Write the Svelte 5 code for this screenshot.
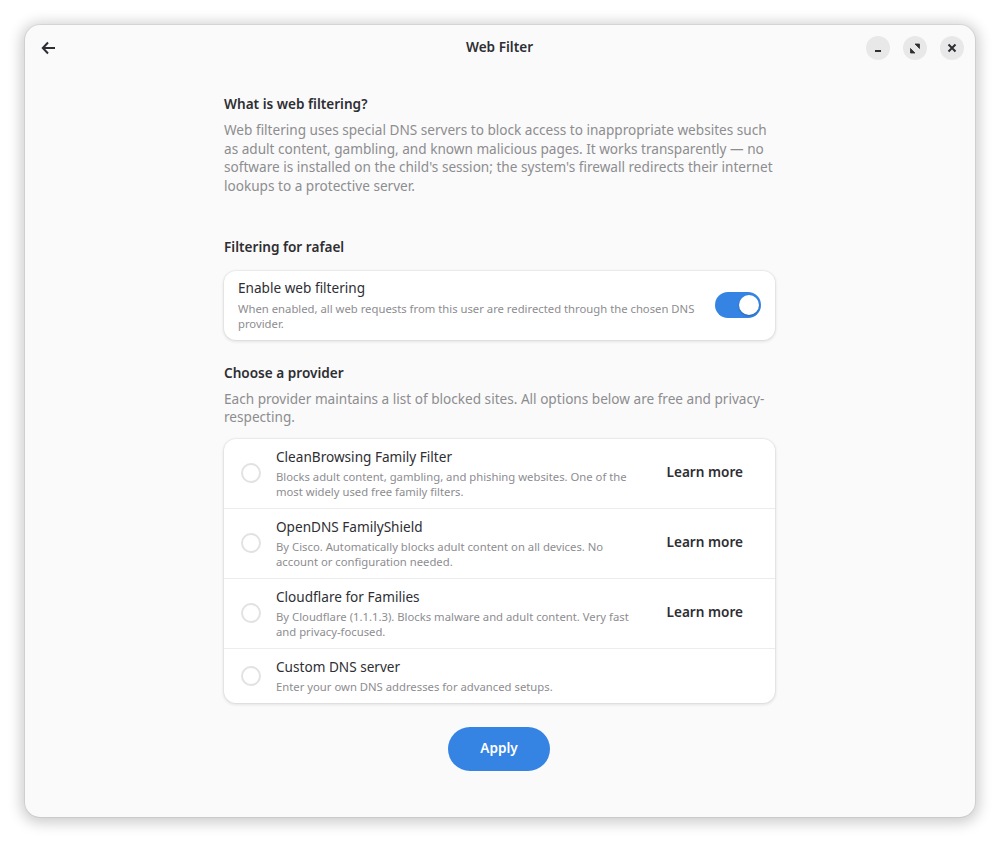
<script lang="ts">
  const providers = [
    { name: "CleanBrowsing Family Filter", desc: "Blocks adult content, gambling, and phishing websites. One of the most widely used free family filters.", more: true },
    { name: "OpenDNS FamilyShield", desc: "By Cisco. Automatically blocks adult content on all devices. No account or configuration needed.", more: true },
    { name: "Cloudflare for Families", desc: "By Cloudflare (1.1.1.3). Blocks malware and adult content. Very fast and privacy-focused.", more: true },
    { name: "Custom DNS server", desc: "Enter your own DNS addresses for advanced setups.", more: false },
  ];
</script>

<div class="page">
  <div class="window">
    <header>
      <button class="back" aria-label="Back">
        <svg width="16" height="16" viewBox="0 0 16 16"><path d="M7 2.5 1.8 8 7 13.5M2.2 8H14" fill="none" stroke="#2e2e33" stroke-width="2"/></svg>
      </button>
      <h1>Web Filter</h1>
      <div class="controls">
        <button aria-label="Minimize">
          <svg width="16" height="16" viewBox="0 0 16 16"><rect x="5" y="10" width="6" height="2" fill="#2e2e33"/></svg>
        </button>
        <button aria-label="Maximize">
          <svg width="16" height="16" viewBox="0 0 16 16"><path d="M8 4h4.5v4.5zM3.5 8.5V13H8z" fill="#2e2e33" stroke="#2e2e33" stroke-width="0.8"/></svg>
        </button>
        <button aria-label="Close">
          <svg width="16" height="16" viewBox="0 0 16 16"><path d="M4.5 4.5l7 7M11.5 4.5l-7 7" stroke="#2e2e33" stroke-width="2" fill="none"/></svg>
        </button>
      </div>
    </header>

    <main>
      <h2 class="first">What is web filtering?</h2>
      <p class="intro lead">Web filtering uses special DNS servers to block access to inappropriate websites such as adult content, gambling, and known malicious pages. It works transparently — no software is installed on the child's session; the system's firewall redirects their internet lookups to a protective server.</p>

      <h2 class="for">Filtering for rafael</h2>
      <section class="card toggle-row">
        <div class="text">
          <div class="title">Enable web filtering</div>
          <div class="sub">When enabled, all web requests from this user are redirected through the chosen DNS provider.</div>
        </div>
        <div class="switch"><span class="knob"></span></div>
      </section>

      <h2 class="choose">Choose a provider</h2>
      <p class="intro tight">Each provider maintains a list of blocked sites. All options below are free and privacy-respecting.</p>

      <section class="card list">
        {#each providers as p}
          <div class="row">
            <span class="radio"></span>
            <div class="text">
              <div class="title">{p.name}</div>
              <div class="sub">{p.desc}</div>
            </div>
            {#if p.more}
              <button class="more">Learn more</button>
            {/if}
          </div>
        {/each}
      </section>

      <button class="apply">Apply</button>
    </main>
  </div>
</div>

<style>
  :global(body) {
    background: #fff;
  }
  .page {
    padding: 25px;
    height: 792px;
    font-family: "Noto Sans", sans-serif;
    color: #2e2e33;
  }
  button {
    font-family: inherit;
    border: 0;
    padding: 0;
    cursor: pointer;
  }
  .window {
    height: 792px;
    background: #fafafa;
    border-radius: 15px;
    box-shadow: 0 0 0 1px rgba(0, 0, 0, 0.06), 0 2px 14px 4px rgba(0, 0, 0, 0.2);
    display: flex;
    flex-direction: column;
  }
  header {
    height: 46px;
    flex: none;
    display: flex;
    align-items: center;
    position: relative;
    padding: 0 11px 0 16px;
  }
  .back {
    background: none;
    display: flex;
    width: 16px;
    height: 16px;
  }
  h1 {
    flex: 1;
    margin: 0 0 2px;
    text-align: center;
    font-size: 13.6px;
    font-weight: 600;
    line-height: 20px;
    padding-left: 76px;
  }
  .controls {
    display: flex;
    gap: 13px;
  }
  .controls button {
    width: 24px;
    height: 24px;
    border-radius: 50%;
    background: #e8e8e8;
    display: flex;
    align-items: center;
    justify-content: center;
  }
  main {
    width: 551px;
    margin: 0 0 0 199px;
    display: flex;
    flex-direction: column;
  }
  h2 {
    margin: 0;
    font-size: 13.6px;
    font-weight: 600;
    line-height: 19px;
  }
  .first {
    margin-top: 23px;
  }
  .for {
    margin-top: 41px;
  }
  .choose {
    margin-top: 23px;
  }
  .intro {
    margin: 7px 0 0;
    font-size: 13.6px;
    line-height: 18.67px;
    color: #8d8d90;
  }
  .lead {
    margin-top: 8px;
  }
  .tight {
    margin-top: 8px;
  }
  .card {
    background: #fff;
    border-radius: 12px;
    box-shadow: 0 0 0 1px rgba(0, 0, 0, 0.03), 0 1px 3px 1px rgba(0, 0, 0, 0.09);
  }
  .toggle-row {
    margin-top: 15px;
    height: 69px;
    display: flex;
    align-items: center;
    padding: 0 14px;
    gap: 14px;
  }
  .toggle-row .title {
    line-height: 16px;
  }
  .toggle-row .sub {
    margin-top: 5px;
  }
  .text {
    flex: 1;
    min-width: 0;
  }
  .title {
    font-size: 13.6px;
    line-height: 18px;
    color: #2e2e33;
  }
  .sub {
    margin-top: 3px;
    font-size: 11.29px;
    line-height: 15px;
    color: #8d8d90;
  }
  .switch {
    width: 46px;
    height: 26px;
    flex: none;
    background: #3584e4;
    border-radius: 13px;
    display: flex;
    align-items: center;
    justify-content: flex-end;
    padding: 0 2px;
    box-sizing: border-box;
  }
  .knob {
    width: 20px;
    height: 20px;
    border-radius: 50%;
    background: #fff;
    box-shadow: 0 1px 2px rgba(0, 0, 0, 0.25);
  }
  .list {
    margin-top: 12px;
  }
  .row {
    display: flex;
    align-items: center;
    min-height: 69px;
    padding: 0 32px 0 17px;
    border-top: 1px solid #ececec;
  }
  .row:first-child {
    border-top: 0;
  }
  .row:last-child {
    min-height: 54px;
  }
  .row:not(:last-child) .radio {
    margin-bottom: 1px;
  }
  .radio {
    width: 16px;
    height: 16px;
    border: 2px solid #e2e2e2;
    border-radius: 50%;
    flex: none;
    margin-right: 15px;
  }
  .row .text {
    max-width: 365px;
  }
  .more {
    margin-left: auto;
    margin-bottom: 5px;
    background: none;
    font-size: 13.6px;
    font-weight: 600;
    color: #2e2e33;
  }
  .apply {
    align-self: flex-start;
    margin: 24px 0 0 224px;
    width: 102px;
    height: 44px;
    padding-bottom: 4px;
    border-radius: 22px;
    background: #3584e4;
    color: #fff;
    font-size: 13.6px;
    font-weight: 600;
  }
</style>
